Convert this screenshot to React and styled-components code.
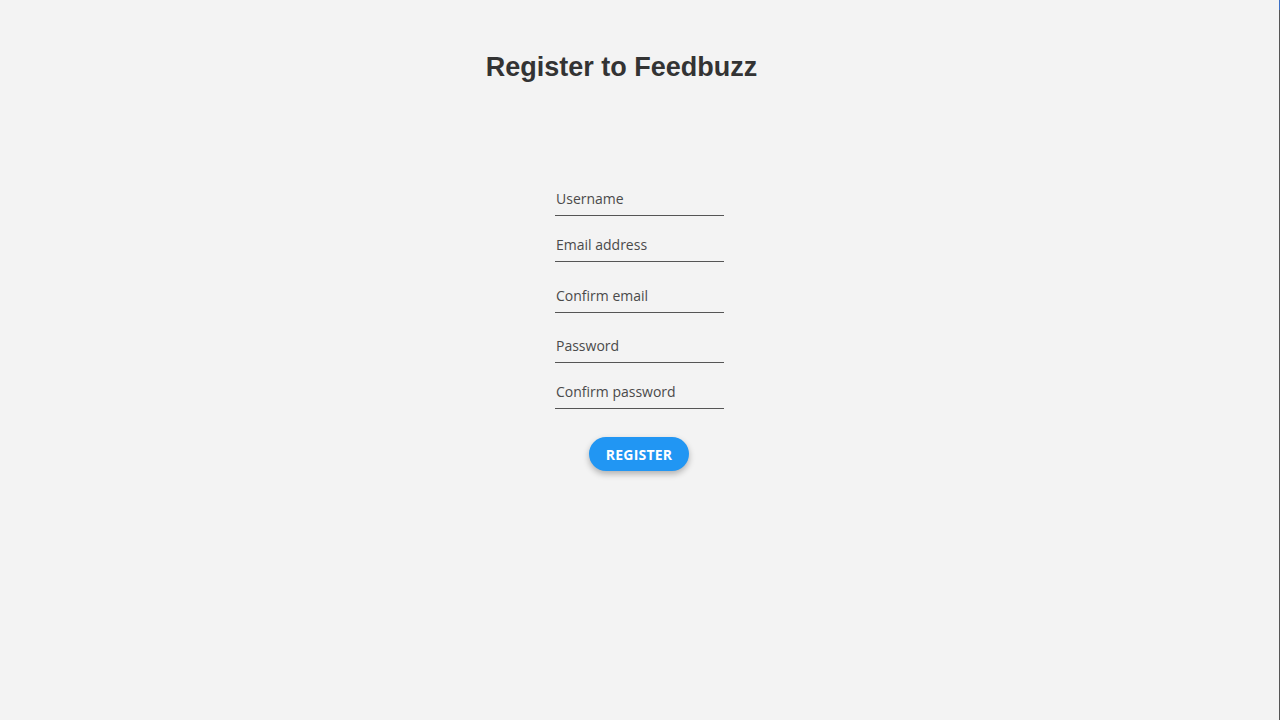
import React from 'react';
import styled, { createGlobalStyle } from 'styled-components';

const GlobalStyle = createGlobalStyle`
  html, body {
    margin: 0;
    padding: 0;
    background-color: #f3f3f3;
  }
`;

const Page = styled.div`
  min-height: 720px;
  padding-right: 1px;
  display: flex;
  flex-direction: column;
  align-items: center;
  font-family: 'Open Sans', 'Noto Sans', sans-serif;
`;

const Title = styled.h1`
  margin: 51px 36px 0 0;
  font-family: 'Liberation Sans', Arial, sans-serif;
  font-size: 27px;
  font-weight: bold;
  color: #333;
  line-height: 32px;
`;

const Form = styled.form`
  margin-top: 106px;
  display: flex;
  flex-direction: column;
  align-items: center;
`;

const Input = styled.input`
  display: block;
  width: 169px;
  box-sizing: border-box;
  margin-top: ${({ gap }) => gap}px;
  padding: 1px 1px 7px;
  border: none;
  border-bottom: 1px solid #555;
  background: transparent;
  font-family: 'Open Sans', 'Noto Sans', sans-serif;
  font-size: 14px;
  line-height: 18px;
  color: #444;
  outline: none;

  &::placeholder {
    color: #4a4a4a;
  }
`;

const SubmitButton = styled.button`
  margin: 28px 1px 0 0;
  width: 100px;
  height: 34px;
  border: none;
  border-radius: 17px;
  background-color: #2196f3;
  color: #fff;
  font-family: 'Open Sans', 'Noto Sans', sans-serif;
  font-weight: bold;
  font-size: 14px;
  letter-spacing: 0.2px;
  box-shadow: 0 3px 6px rgba(0, 0, 0, 0.28);
  cursor: pointer;
`;

const EdgeBar = styled.div`
  position: fixed;
  top: 0;
  right: 0;
  width: 1px;
  height: 100%;
  background: linear-gradient(#3b6fc4 0 10px, #555 10px);
`;

const fields = [
  { name: 'username', label: 'Username', gap: 0, type: 'text' },
  { name: 'email', label: 'Email address', gap: 19, type: 'email' },
  { name: 'confirmEmail', label: 'Confirm email', gap: 24, type: 'email' },
  { name: 'password', label: 'Password', gap: 23, type: 'password' },
  { name: 'confirmPassword', label: 'Confirm password', gap: 19, type: 'password' },
];

export default function App() {
  return (
    <>
      <GlobalStyle />
      <Page>
        <Title>Register to Feedbuzz</Title>
        <Form onSubmit={e => e.preventDefault()}>
          {fields.map(field => (
            <Input
              key={field.name}
              name={field.name}
              type={field.type}
              placeholder={field.label}
              gap={field.gap}
            />
          ))}
          <SubmitButton type="submit">REGISTER</SubmitButton>
        </Form>
      </Page>
      <EdgeBar />
    </>
  );
}
